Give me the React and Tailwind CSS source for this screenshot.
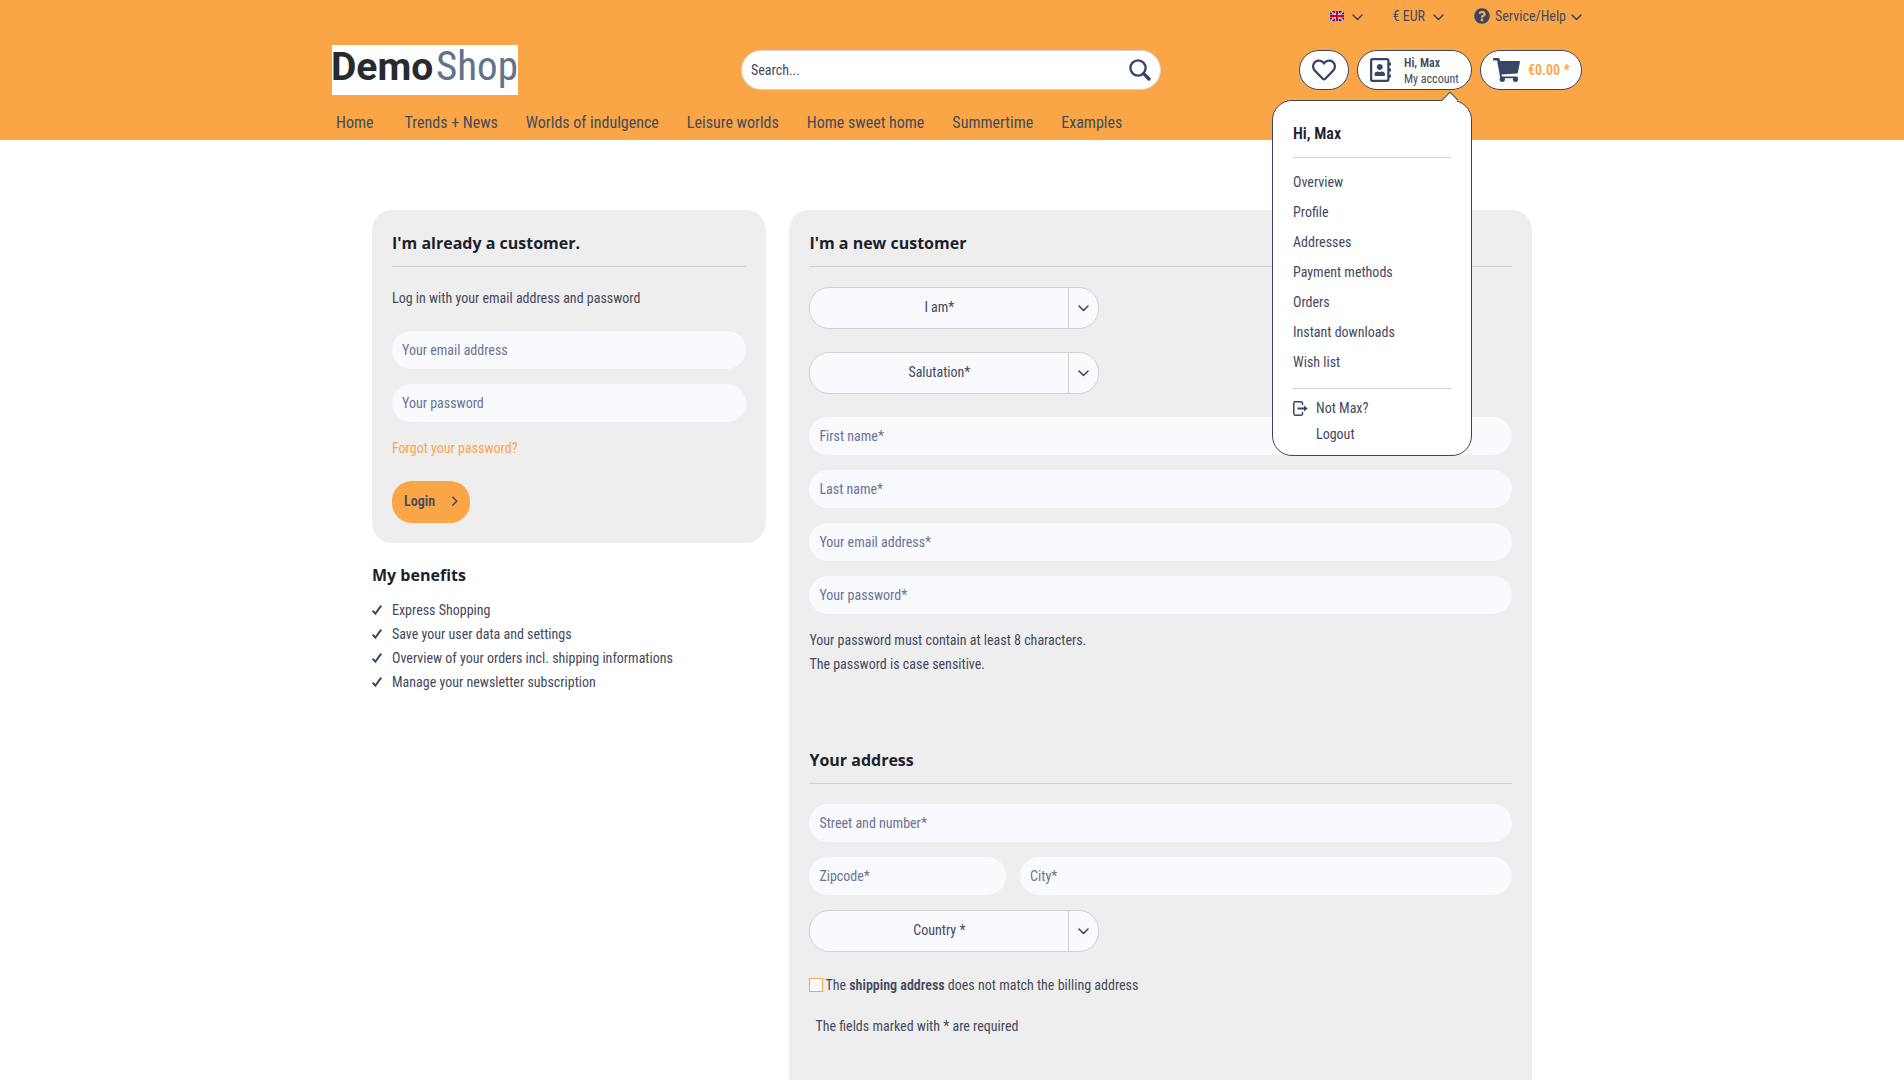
import { FaQuestionCircle, FaRegAddressBook, FaRegHeart } from 'react-icons/fa';

const navItems = [
  'Home',
  'Trends + News',
  'Worlds of indulgence',
  'Leisure worlds',
  'Home sweet home',
  'Summertime',
  'Examples',
];

const accountLinks = [
  'Overview',
  'Profile',
  'Addresses',
  'Payment methods',
  'Orders',
  'Instant downloads',
  'Wish list',
];

const benefits = [
  'Express Shopping',
  'Save your user data and settings',
  'Overview of your orders incl. shipping informations',
  'Manage your newsletter subscription',
];

const Chevron = ({ className = 'w-[11px] mt-0.5' }) => (
  <svg viewBox="0 0 11 7" className={`text-[#3a4564] ${className}`} fill="none" stroke="currentColor" strokeWidth="1.5" strokeLinecap="round" strokeLinejoin="round">
    <path d="M1 1l4.5 4.500L10 1" />
  </svg>
);

const UkFlag = () => (
  <svg viewBox="0 0 14 10" className="w-3.5 h-2.5">
    <rect width="14" height="10" fill="#15157a" />
    <path d="M0 0l14 10M14 0L0 10" stroke="#fff" strokeWidth="1.6" />
    <path d="M0 0l14 10M14 0L0 10" stroke="#d8102f" strokeWidth="0.6" />
    <path d="M7 0v10M0 5h14" stroke="#fff" strokeWidth="3.2" />
    <path d="M7 0v10M0 5h14" stroke="#d00" strokeWidth="2" />
  </svg>
);

const SearchIcon = () => (
  <svg viewBox="0 0 22 22" className="w-[22px] h-[22px]" fill="none" stroke="currentColor">
    <circle cx="9" cy="9" r="7.600" strokeWidth="2.400" />
    <path d="M14.600 14.600l5.400 5.400" strokeWidth="3.400" strokeLinecap="round" />
  </svg>
);

const CartIcon = () => (
  <svg viewBox="0 0 27 24" className="w-[27px] h-6" fill="currentColor">
    <path d="M0 .6C0 .2.4 0 .8 0h4.600c.6 0 1 .4 1.200 1l.5 2H26c.7 0 1 .5.900 1.100l-2 10.300c-.1.6-.5.9-1.100 1L8.500 16.600l.4 1.800h14.700c.8 0 1.100.5 1.100 1.100v.7H7.300L4.100 2.600H.8C.3 2.600 0 2.300 0 1.900z" />
    <circle cx="9.300" cy="21.300" r="2.600" />
    <circle cx="22.500" cy="21.300" r="2.600" />
  </svg>
);

const LogoutIcon = () => (
  <svg viewBox="0 0 15 15" className="w-[15px] h-[15px]" fill="none" stroke="currentColor" strokeWidth="1.5">
    <path d="M9.500 4V2.200c0-.8-.5-1.400-1.300-1.400H2.200C1.400.8.800 1.400.8 2.200v10.600c0 .8.6 1.400 1.400 1.400h6c.8 0 1.300-.6 1.300-1.400V11" />
    <path d="M4.500 7.500h8" strokeWidth="2" />
    <path d="M11 4.600l3.800 2.900L11 10.400z" fill="currentColor" stroke="none" />
  </svg>
);

const CheckIcon = () => (
  <svg viewBox="0 0 10 10" className="w-2.5 h-2.5" fill="none" stroke="#3a4564" strokeWidth="2">
    <path d="M.6 5.600l2.800 3L9.200.7" />
  </svg>
);

const Field = ({ label, type = 'text', className = '' }) => (
  <input
    type={type}
    aria-label={label}
    placeholder={label}
    className={`block w-full h-[38px] px-2.5 rounded-[19px] bg-[#f8fafd] text-sm placeholder:text-[#6b7396] outline-none ${className}`}
  />
);

const Select = ({ label }) => (
  <div className="relative w-[290px] h-[42px] rounded-[20px] border border-[#d2d2d4] bg-[#f8fafd] overflow-hidden">
    <select
      aria-label={label}
      className="appearance-none w-full h-full pr-[30px] pb-0.5 text-sm text-center outline-none"
    >
      <option>{label}</option>
    </select>
    <span className="pointer-events-none absolute inset-y-0 right-0 w-[30px] border-l border-[#d2d2d4] flex items-center justify-center">
      <Chevron className="w-[11px]" />
    </span>
  </div>
);

const CardTitle = ({ children }) => (
  <h2 className="h-[37px] border-b border-[#d2d2d4] font-['Open_Sans',sans-serif] text-base leading-[26px] font-bold text-[#1d1f2c]">
    {children}
  </h2>
);

const AccountMenu = () => (
  <div className="absolute z-10 right-0 top-[50px] w-[200px] h-[356px] px-5 pt-5 rounded-[20px] border border-[#3a4564] bg-white">
    <span className="absolute -top-[7px] right-[15px] w-3 h-3 rotate-45 border-t border-l border-[#3a4564] bg-white" />
    <p className="h-[37px] border-b border-[#d2d2d4] text-base leading-[26px] font-semibold text-[#1d1f2c]">Hi, Max</p>
    <ul className="pt-[9px] pb-[11px] border-b border-[#d2d2d4] text-sm">
      {accountLinks.map((link) => (
        <li key={link}>
          <a href="#account" className="block leading-[30px]">{link}</a>
        </li>
      ))}
    </ul>
    <a href="#logout" className="flex gap-2 pt-1.5 text-sm leading-[26px]">
      <span className="pt-1.5 text-[#3a4564]"><LogoutIcon /></span>
      <span>Not Max?<br />Logout</span>
    </a>
  </div>
);

const Header = () => (
  <header className="bg-[#faa646]">
    <div className="max-w-[1260px] mx-auto">
      {/* Top bar */}
      <div className="flex justify-end items-center h-8 text-sm">
        <button className="flex items-center gap-2" aria-label="Language">
          <UkFlag />
          <Chevron />
        </button>
        <button className="flex items-center gap-2 ml-[30px]">
          € EUR
          <Chevron />
        </button>
        <button className="flex items-center gap-[5px] ml-[30px]">
          <FaQuestionCircle className="w-4 h-4 text-[#3a4564]" />
          Service/Help
          <Chevron />
        </button>
      </div>

      {/* Logo, search, shop actions */}
      <div className="flex items-start h-[74px] pt-[13px] pl-2.5 text-[#3a4564]">
        <a href="#home" aria-label="DemoShop" className="flex-none">
          <svg viewBox="0 0 186 50" className="w-[186px] h-[50px] overflow-visible">
            <rect width="186" height="50" fill="#fff" />
            <text x="-1" y="35" fontFamily="Roboto, sans-serif" fontWeight="700" fontSize="39" fill="#272b2f">Demo</text>
            <text x="104" y="35" fontFamily="Roboto Condensed, Roboto, sans-serif" fontWeight="400" fontSize="41" fill="#5f7489">Shop</text>
          </svg>
        </a>
        <form className="flex flex-1 max-w-[420px] h-10 mt-[5px] ml-[223px] mr-auto rounded-[20px] border border-[#d2d2d4] bg-white">
          <input type="search" aria-label="Search" placeholder="Search..." className="flex-1 pl-[9px] text-sm placeholder:text-[#434a5e] outline-none" />
          <button type="button" aria-label="Submit search" className="pr-[9px]"><SearchIcon /></button>
        </form>
        <div className="flex gap-2 mt-[5px]">
          <button aria-label="Wish list" className="flex items-center justify-center w-[50px] h-10 rounded-[20px] border border-[#3a4564] bg-white">
            <FaRegHeart className="w-6 h-6" />
          </button>
          <div className="relative text-[#434a5e]">
            <button className="flex items-center w-[115px] h-10 pl-3 rounded-[20px] border border-[#3a4564] bg-white text-xs leading-4 text-left">
              <FaRegAddressBook className="flex-none w-[21px] h-6 mr-[13px] text-[#3a4564]" />
              <span className="pt-0.5 whitespace-nowrap"><b className="font-semibold">Hi, Max</b><br />My account</span>
            </button>
            <AccountMenu />
          </div>
          <button className="flex items-center gap-2 w-[102px] h-10 pl-3 rounded-[20px] border border-[#3a4564] bg-white text-sm font-semibold text-[#faa646] whitespace-nowrap">
            <span className="text-[#3a4564]"><CartIcon /></span>
            €0.00 *
          </button>
        </div>
      </div>

      {/* Navigation */}
      <nav className="flex items-center h-[34px] text-base">
        {navItems.map((item) => (
          <a key={item} href="#shop" className="px-3.5 first:mr-[3px]">{item}</a>
        ))}
      </nav>
    </div>
  </header>
);

const LoginColumn = () => (
  <aside className="w-[34%] text-sm">
    <div className="p-5 rounded-[20px] bg-[#eee]">
      <CardTitle>I'm already a customer.</CardTitle>
      <p className="mt-[19px] leading-6">Log in with your email address and password</p>
      <div className="flex flex-col gap-[15px] mt-[21px]">
        <Field label="Your email address" type="email" />
        <Field label="Your password" type="password" />
      </div>
      <a href="#forgot" className="block mt-3.5 leading-6 text-[#faa646]">Forgot your password?</a>
      <button className="flex items-center justify-between w-[78px] h-[42px] mt-[21px] pl-3 pr-2.5 pb-0.5 rounded-[20px] bg-[#faa646] font-semibold">
        Login
        <Chevron className="w-2.5 -rotate-90" />
      </button>
    </div>

    <h2 className="mt-5 font-['Open_Sans',sans-serif] text-base leading-6 font-bold text-[#1d1f2c]">My benefits</h2>
    <ul className="mt-[11px]">
      {benefits.map((benefit) => (
        <li key={benefit} className="flex items-center gap-2.5 leading-6">
          <CheckIcon />
          {benefit}
        </li>
      ))}
    </ul>
  </aside>
);

const RegisterForm = () => (
  <form className="flex-1 p-5 rounded-t-[20px] bg-[#eee] text-sm">
    <CardTitle>I'm a new customer</CardTitle>
    <div className="flex flex-col gap-[23px] mt-5">
      <Select label="I am*" />
      <Select label="Salutation*" />
    </div>
    <div className="flex flex-col gap-[15px] mt-[23px]">
      <Field label="First name*" />
      <Field label="Last name*" />
      <Field label="Your email address*" type="email" />
      <Field label="Your password*" type="password" />
    </div>
    <p className="mt-3.5 mb-[71px] leading-6">
      Your password must contain at least 8 characters.<br />
      The password is case sensitive.
    </p>

    <CardTitle>Your address</CardTitle>
    <div className="flex flex-col gap-[15px] mt-5">
      <Field label="Street and number*" />
      <div className="flex gap-3.5">
        <Field label="Zipcode*" className="max-w-[28%]" />
        <Field label="City*" />
      </div>
      <Select label="Country *" />
    </div>
    <div className="flex items-center gap-0.5 mt-[21px] leading-6">
      <input id="shipping" type="checkbox" className="appearance-none w-3.5 h-3.5 border border-[#faa646] bg-[#f8fafd]" />
      <label htmlFor="shipping">
        The <b className="font-semibold">shipping address</b> does not match the billing address
      </label>
    </div>
    <p className="mt-[17px] pl-1.5 leading-6">The fields marked with * are required</p>
  </form>
);

export default function App() {
  return (
    <div className="flex flex-col min-h-screen bg-white font-['Roboto_Condensed',Roboto,sans-serif] text-[#434a5e]">
      <Header />
      <main className="flex flex-1 gap-[23px] w-full max-w-[1160px] mx-auto pt-[70px]">
        <LoginColumn />
        <RegisterForm />
      </main>
    </div>
  );
}
